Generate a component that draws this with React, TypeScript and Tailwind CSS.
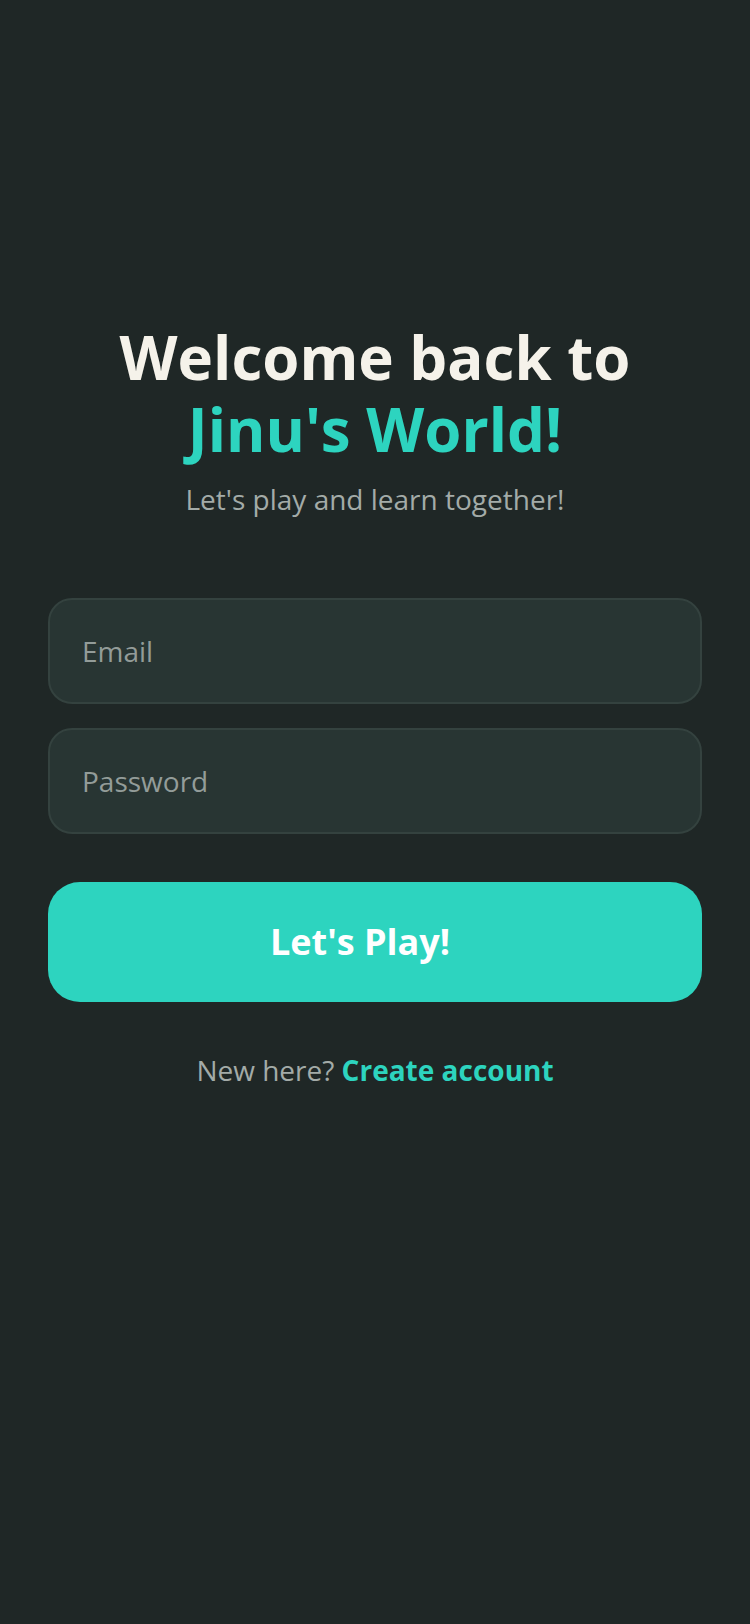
import React from "react";

export default function App() {
  return (
    <div
      className="min-h-[1624px] w-full bg-[#1f2726] px-12 pt-[321px]"
      style={{ fontFamily: '"Open Sans", "Noto Sans", sans-serif' }}
    >
      <div className="flex flex-col items-center text-center">
        <h1 className="text-[60px] font-bold leading-[72px] text-[#f5f2ea]">
          Welcome back to
          <br />
          <span className="text-[#2dd4bf]">Jinu's World!</span>
        </h1>
        <p className="mt-[14px] text-[28px] leading-[40px] text-[#a3aba8]">
          Let's play and learn together!
        </p>
      </div>

      <form className="mt-[79px] flex flex-col" onSubmit={(e) => e.preventDefault()}>
        <input
          type="email"
          placeholder="Email"
          className="h-[106px] w-full rounded-3xl border-2 border-[#34423f] bg-[#283533] px-8 text-[28px] text-[#f5f2ea] placeholder-[#939c99] outline-none"
        />
        <input
          type="password"
          placeholder="Password"
          className="mt-6 h-[106px] w-full rounded-3xl border-2 border-[#34423f] bg-[#283533] px-8 text-[28px] text-[#f5f2ea] placeholder-[#939c99] outline-none"
        />
        <button
          type="submit"
          className="mt-12 h-[120px] w-full rounded-[32px] bg-[#2dd4bf] pr-[30px] text-[36px] font-bold text-white"
        >
          Let's Play!
        </button>
      </form>

      <p className="mt-12 text-center text-[28px] leading-[40px] text-[#a3aba8]">
        New here? <span className="font-bold text-[#2dd4bf]">Create account</span>
      </p>
    </div>
  );
}
